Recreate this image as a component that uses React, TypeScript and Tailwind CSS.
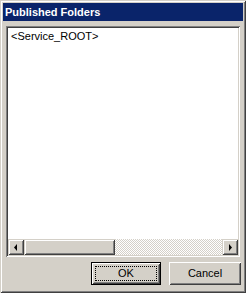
import React from "react";

const raised =
  "shadow-[inset_1px_1px_#d4d0c8,inset_-1px_-1px_#404040,inset_2px_2px_#ffffff,inset_-2px_-2px_#808080]";

export default function App() {
  return (
    <div
      className={`w-[246px] h-[293px] bg-[#d4d0c8] p-[3px] flex flex-col ${raised}`}
      style={{ fontFamily: '"Liberation Sans", Arial, sans-serif' }}
    >
      <div className="h-[18px] bg-[#0a246a] flex items-center pl-[2px] text-white font-bold text-[11px] leading-none">
        Published Folders
      </div>
      <div className="mt-[5px] ml-[3px] w-[234px] h-[231px] p-[2px] bg-white flex flex-col shadow-[inset_1px_1px_#808080,inset_-1px_-1px_#ffffff,inset_2px_2px_#404040,inset_-2px_-2px_#d4d0c8]">
        <div className="flex-1 pl-[3px] pt-[2px] text-[11px] leading-[13px] text-black">
          &lt;Service_ROOT&gt;
        </div>
        <div className="h-[16px] flex">
          <div className={`w-[16px] h-[16px] bg-[#d4d0c8] flex items-center justify-center ${raised}`}>
            <svg width="4" height="7" viewBox="0 0 4 7">
              <path d="M3 0 L3 7 L0 3.5 Z" fill="#000" />
            </svg>
          </div>
          <div className={`w-[91px] h-[16px] bg-[#d4d0c8] ${raised}`} />
          <div className="flex-1 h-[16px] bg-[conic-gradient(#ffffff_25%,#d4d0c8_0_50%,#ffffff_0_75%,#d4d0c8_0)] bg-[length:2px_2px]" />
          <div className={`w-[16px] h-[16px] bg-[#d4d0c8] flex items-center justify-center ${raised}`}>
            <svg width="4" height="7" viewBox="0 0 4 7">
              <path d="M1 0 L1 7 L4 3.5 Z" fill="#000" />
            </svg>
          </div>
        </div>
      </div>
      <div className="mt-[5px] flex justify-end gap-[8px] pr-[2px] text-[11px] text-black">
        <div className="w-[70px] h-[23px] border border-black bg-[#d4d0c8] shadow-[inset_1px_1px_#ffffff,inset_-1px_-1px_#404040,inset_2px_2px_#d4d0c8,inset_-2px_-2px_#808080] p-[3px]">
          <div className="w-full h-full border border-dotted border-black flex items-center justify-center">
            OK
          </div>
        </div>
        <div className="w-[72px] h-[23px] bg-[#d4d0c8] shadow-[inset_1px_1px_#ffffff,inset_-1px_-1px_#404040,inset_2px_2px_#d4d0c8,inset_-2px_-2px_#808080] flex items-center justify-center">
          Cancel
        </div>
      </div>
    </div>
  );
}
